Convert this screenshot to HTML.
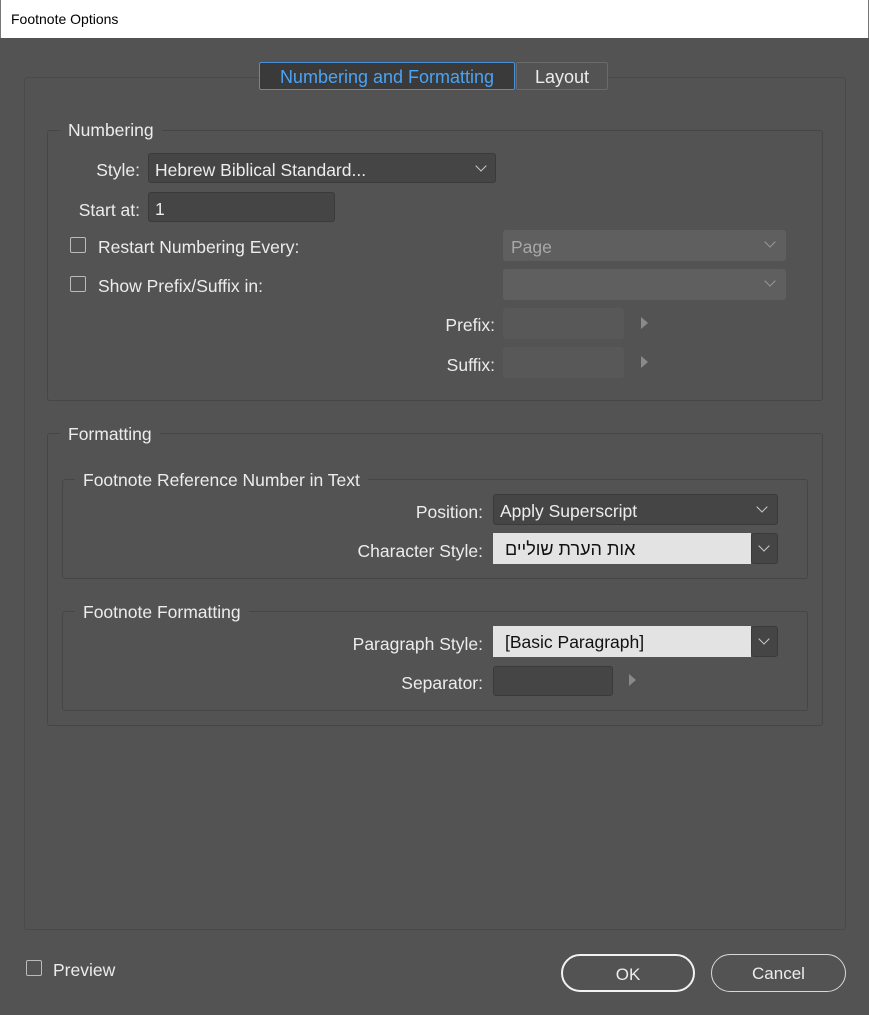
<!DOCTYPE html>
<html><head><meta charset="utf-8"><style>
*{box-sizing:border-box;margin:0;padding:0}
body{width:869px;height:1015px;background:#535353;position:relative;overflow:hidden;font-family:"Liberation Sans","Noto Sans CJK SC",sans-serif;font-size:17.5px;color:#ececec}
.a{position:absolute;white-space:nowrap}
.title{left:0;top:0;width:869px;height:38px;background:#fff;color:#000;font-size:14px;padding:11px 0 0 10px;border-left:1px solid #777;border-right:1px solid #777}
.box{position:absolute;border:1px solid #464646;border-radius:3px}
.lbl{position:absolute;background:#535353;padding:0 8px;line-height:18px}
.inp{position:absolute;background:#454545;border:1px solid #3a3a3a;border-radius:3px;line-height:32px;padding-left:6px}
.dis{position:absolute;background:#5f5f5f;border-radius:3px;color:#a8a8a8;line-height:34px;padding-left:8px}
.lt{position:absolute;background:#e3e3e3;color:#111;line-height:32px;padding-left:12px}
.chev{position:absolute;width:8px;height:8px;border-right:1px solid #ccc;border-bottom:1px solid #ccc;transform:rotate(45deg)}
.cb{position:absolute;width:16px;height:16px;border:1px solid #bbb;border-radius:2px}
.tri{position:absolute;width:0;height:0;border-left:7px solid #8a8a8a;border-top:6px solid transparent;border-bottom:6px solid transparent}
.r{text-align:right}
</style></head><body>
<div class="a title">Footnote Options</div>
<div class="box" style="left:24px;top:77px;width:822px;height:853px;border-color:#4a4a4a"></div>
<div class="a" style="left:259px;top:62px;width:256px;height:28px;background:#3a3a3a;border:1px solid #4a8fd6;border-radius:2px;color:#4ba3f5;text-align:center;line-height:29px;font-size:18px">Numbering and Formatting</div>
<div class="a" style="left:516px;top:62px;width:92px;height:28px;background:#535353;border:1px solid #6a6a6a;border-radius:2px;text-align:center;line-height:29px;font-size:18px">Layout</div>

<div class="box" style="left:47px;top:130px;width:776px;height:271px"></div>
<div class="lbl" style="left:60px;top:121px">Numbering</div>
<div class="a r" style="left:40px;top:160px;width:100px">Style:</div>
<div class="inp" style="left:148px;top:153px;width:348px;height:30px">Hebrew Biblical Standard...</div>
<div class="chev" style="left:477px;top:162px"></div>
<div class="a r" style="left:40px;top:200px;width:100px">Start at:</div>
<div class="inp" style="left:148px;top:192px;width:187px;height:30px">1</div>
<div class="cb" style="left:70px;top:237px"></div>
<div class="a" style="left:98px;top:237px">Restart Numbering Every:</div>
<div class="dis" style="left:503px;top:230px;width:283px;height:31px">Page</div>
<div class="chev" style="left:766px;top:238px;border-color:#999"></div>
<div class="cb" style="left:70px;top:276px"></div>
<div class="a" style="left:98px;top:276px">Show Prefix/Suffix in:</div>
<div class="dis" style="left:503px;top:269px;width:283px;height:31px"></div>
<div class="chev" style="left:766px;top:277px;border-color:#999"></div>
<div class="a r" style="left:400px;top:315px;width:95px">Prefix:</div>
<div class="dis" style="left:503px;top:308px;width:121px;height:31px;background:#585858"></div>
<div class="tri" style="left:641px;top:317px"></div>
<div class="a r" style="left:400px;top:355px;width:95px">Suffix:</div>
<div class="dis" style="left:503px;top:347px;width:121px;height:31px;background:#585858"></div>
<div class="tri" style="left:641px;top:356px"></div>

<div class="box" style="left:47px;top:433px;width:776px;height:293px"></div>
<div class="lbl" style="left:60px;top:425px">Formatting</div>
<div class="box" style="left:62px;top:479px;width:746px;height:100px"></div>
<div class="lbl" style="left:75px;top:471px">Footnote Reference Number in Text</div>
<div class="a r" style="left:280px;top:502px;width:203px">Position:</div>
<div class="inp" style="left:493px;top:494px;width:285px;height:31px">Apply Superscript</div>
<div class="chev" style="left:758px;top:503px"></div>
<div class="a r" style="left:280px;top:541px;width:203px">Character Style:</div>
<div class="lt" style="left:493px;top:533px;width:258px;height:31px;font-family:'Liberation Sans','DejaVu Sans',sans-serif;font-size:18px;padding-left:0"><span style="float:left;margin-left:12px;direction:rtl">אות הערת שוליים</span></div>
<div class="inp" style="left:751px;top:533px;width:27px;height:31px;padding:0"></div>
<div class="chev" style="left:760px;top:542px"></div>

<div class="box" style="left:62px;top:611px;width:746px;height:100px"></div>
<div class="lbl" style="left:75px;top:603px">Footnote Formatting</div>
<div class="a r" style="left:280px;top:634px;width:203px">Paragraph Style:</div>
<div class="lt" style="left:493px;top:626px;width:258px;height:31px">[Basic Paragraph]</div>
<div class="inp" style="left:751px;top:626px;width:27px;height:31px;padding:0"></div>
<div class="chev" style="left:760px;top:635px"></div>
<div class="a r" style="left:280px;top:673px;width:203px">Separator:</div>
<div class="inp" style="left:493px;top:666px;width:120px;height:30px"></div>
<div class="tri" style="left:629px;top:674px"></div>

<div class="cb" style="left:26px;top:960px"></div>
<div class="a" style="left:53px;top:960px">Preview</div>
<div class="a" style="left:561px;top:954px;width:134px;height:38px;border:2px solid #f2f2f2;border-radius:19px;text-align:center;line-height:37px;font-size:17px">OK</div>
<div class="a" style="left:711px;top:954px;width:135px;height:38px;border:1px solid #d8d8d8;border-radius:19px;text-align:center;line-height:38px;font-size:17px">Cancel</div>
</body></html>
